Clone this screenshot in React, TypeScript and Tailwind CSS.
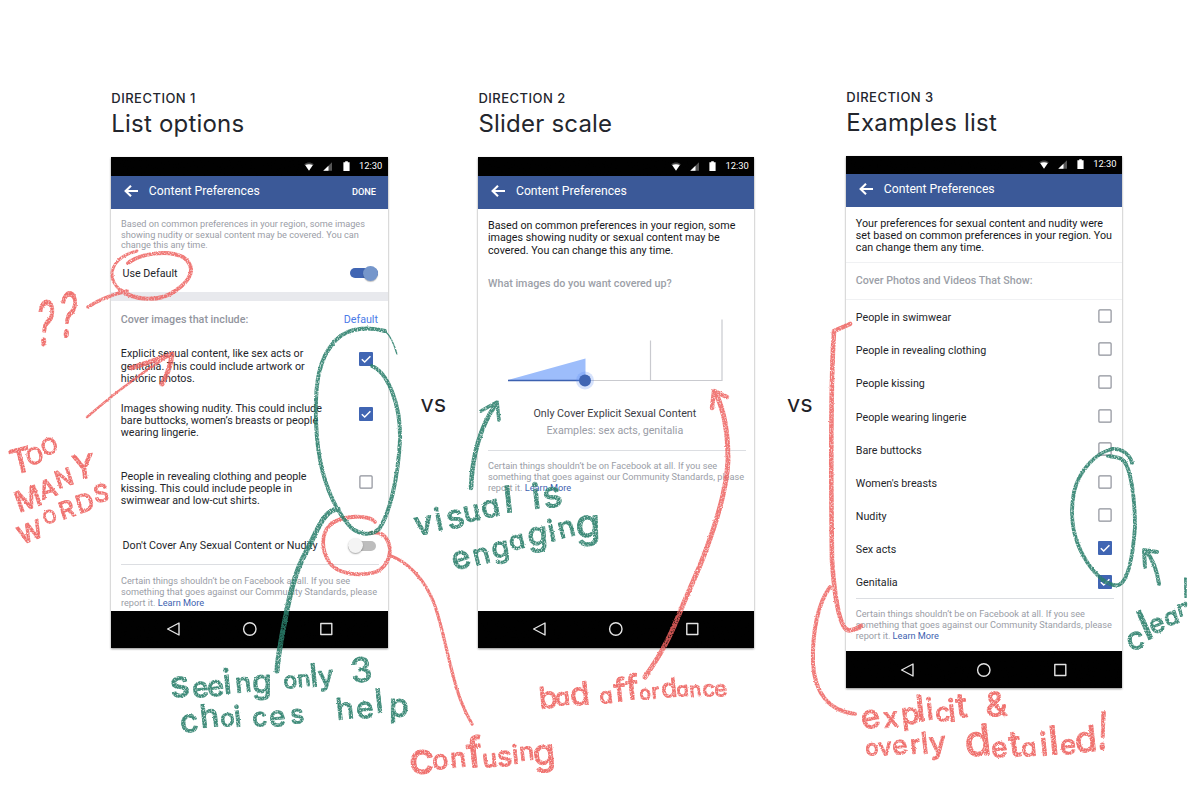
import React, { type ReactNode } from 'react';

const body = 'text-[10.72px] leading-[12.3px]';
const small = 'text-[9.19px] leading-[10.7px] text-[#9a9da6]';

function StatusBar({ compact }: { compact?: boolean }) {
  return (
    <div className={`flex shrink-0 items-center justify-end bg-black pr-[5.5px] text-white ${compact ? 'h-[18px] pb-px' : 'h-[18.5px]'}`}>
      <svg className="mr-[9px] h-[9px] w-[10px]" viewBox="0 0 10 9">
        <path d="M0.2 2.2C3 -0.2 7 -0.2 9.8 2.2L5 8.6Z" fill="#444" />
        <path d="M1.2 3.1C3.6 1.8 6.4 1.8 8.8 3.1L5 8.8Z" fill="#fff" />
      </svg>
      <svg className="mr-[10px] h-[9px] w-[9.5px]" viewBox="0 0 10 9">
        <path d="M0.3 9L9.5 0V9Z" fill="#555" />
        <path d="M0.3 9L5.8 3.6V9Z" fill="#fff" />
      </svg>
      <svg className="mr-[9px] h-[10px] w-[7px]" viewBox="0 0 7 10">
        <path d="M0.4 1.3H2.2V0.3H4.8V1.3H6.6V9.9H0.4Z" fill="#fff" />
      </svg>
      <span className="w-[23.5px] text-[9.4px] leading-[18px]">12:30</span>
    </div>
  );
}

function Header({ done, compact }: { done?: boolean; compact?: boolean }) {
  return (
    <div className={`flex shrink-0 items-center bg-[#3b5998] pb-[2px] pl-[12.5px] pr-[12px] text-white ${compact ? 'h-[33px]' : 'h-[33.5px]'}`}>
      <svg className="mr-[10.5px] h-[12px] w-[14.5px]" viewBox="0 0 14.5 12" fill="none" stroke="#fff" strokeWidth="2.1">
        <path d="M1.6 6H14M7 0.8L1.6 6L7 11.2" />
      </svg>
      <span className="grow text-[12.2px] leading-[16px]">Content Preferences</span>
      {done && <span className="pt-[2px] text-[9.2px] font-medium leading-[14px]">DONE</span>}
    </div>
  );
}

function NavBar() {
  return (
    <div className="flex h-[37px] shrink-0 items-center justify-center bg-black">
      <svg className="h-[16px] w-[170px]" viewBox="0 0 170 16" fill="none" stroke="#e4e4e4" strokeWidth="1.4" strokeLinejoin="round">
        <path d="M2.6 8L14 2V14Z" />
        <circle cx="84.8" cy="8" r="6.2" />
        <rect x="155.8" y="2.5" width="11" height="11" />
      </svg>
    </div>
  );
}

function Checkbox({ checked }: { checked?: boolean }) {
  return (
    <svg className="h-[14px] w-[14px] shrink-0" viewBox="0 0 14 14" fill="none">
      {checked ? (
        <>
          <rect width="14" height="14" rx="1" fill="#4065b3" />
          <path d="M2.8 7.2L5.7 10L11.4 4.3" stroke="#fff" strokeWidth="1.5" />
        </>
      ) : (
        <rect x="0.9" y="0.9" width="12.2" height="12.2" rx="0.9" stroke="#8f929b" strokeWidth="1.2" />
      )}
    </svg>
  );
}

function Phone({ done, compact, height, children }: { done?: boolean; compact?: boolean; height: string; children: ReactNode }) {
  return (
    <div className={`flex flex-col bg-white shadow-[0_1px_2px_rgba(0,0,0,0.45)] ${height}`}>
      <StatusBar compact={compact} />
      <Header done={done} compact={compact} />
      <div className="flex min-h-0 grow flex-col">{children}</div>
      <NavBar />
    </div>
  );
}

function Heading({ label, title }: { label: string; title: string }) {
  return (
    <div className="font-[Inter,sans-serif] text-[#23262d]">
      <div className="h-[21px] text-[13px] font-medium leading-[20px] tracking-[0.48px]">{label}</div>
      <div className="mb-[18px] h-[30px] text-[24px] leading-[30px] tracking-[0.2px]">{title}</div>
    </div>
  );
}

function Policy() {
  return (
    <p className={`whitespace-nowrap ${small}`}>
      Certain things shouldn’t be on Facebook at all. If you see
      <br />
      something that goes against our Community Standards, please
      <br />
      report it. <span className="text-[#3e62b0]">Learn More</span>
    </p>
  );
}

function Option({ lines, checked, className }: { lines: string[]; checked?: boolean; className: string }) {
  return (
    <div className={`flex items-start justify-between pl-[9.5px] pr-[15px] text-[#24262b] ${className}`}>
      <p className={`whitespace-nowrap ${body}`}>
        {lines.map((l) => (
          <span key={l} className="block">{l}</span>
        ))}
      </p>
      <div className="mt-[4px] flex">
        <Checkbox checked={checked} />
      </div>
    </div>
  );
}

function Versus() {
  return (
    <div className="flex w-[90.5px] shrink-0 justify-center pt-[391px] font-[Inter,sans-serif] text-[23.5px] leading-[26px] text-[#1f2228]">
      vs
    </div>
  );
}

const examples: [string, boolean][] = [
  ['People in swimwear', false],
  ['People in revealing clothing', false],
  ['People kissing', false],
  ['People wearing lingerie', false],
  ['Bare buttocks', false],
  ["Women's breasts", false],
  ['Nudity', false],
  ['Sex acts', true],
  ['Genitalia', true],
];

type Glyph = [string, number, number, number, number?];

function Hand({ glyphs, color, weight = 500 }: { glyphs: Glyph[]; color: string; weight?: number }) {
  return (
    <text fill={color} stroke={color} strokeWidth="0.8" fontWeight={weight} className="font-[Inter,sans-serif] [font-feature-settings:'cv11']">
      {glyphs.map(([c, x, y, size, rotate], i) => (
        <tspan key={i} x={x} y={y} fontSize={size} rotate={rotate ?? -6}>{c}</tspan>
      ))}
    </text>
  );
}

const RED = '#ee625f';
const GREEN = '#2b7f6b';

const redNotes: Glyph[][] = [
  [['T', 13, 475, 34, -14], ['O', 28, 466, 23, -14], ['O', 43, 456, 22, -14]],
  [['M', 19, 513, 29, -20], ['A', 42, 500, 25, -18], ['N', 58, 489, 24, -18], ['Y', 74, 480, 33, -8]],
  [['W', 22, 545, 25, -22], ['O', 45, 525, 18, -18], ['R', 62, 520, 24, -18], ['D', 79, 514, 25, -18], ['S', 95, 503, 24, -10]],
  [['c', 409, 774, 44, 0], ['o', 433, 770, 27], ['n', 451, 768, 27], ['f', 468, 768, 42], ['u', 483, 768, 25], ['s', 498, 767, 28], ['i', 513, 764, 26], ['n', 520, 761, 25], ['g', 534, 766, 36]],
  [['b', 540, 709, 30], ['a', 556, 706, 24], ['d', 571, 706, 32], [' ', 587, 705, 20], ['a', 600, 704, 22], ['f', 615, 702, 32], ['f', 627, 700, 34], ['o', 640, 700, 19], ['r', 652, 699, 21], ['d', 662, 698, 26], ['a', 677, 697, 20], ['n', 690, 697, 20], ['c', 703, 697, 22], ['e', 715, 697, 22]],
  [['e', 863, 730, 33, -12], ['x', 884, 728, 28], ['p', 902, 725, 30], ['l', 917, 722, 37], ['i', 927, 720, 30], ['c', 936, 722, 26], ['i', 949, 722, 31], ['t', 957, 718, 34], [' ', 975, 718, 20], ['&', 986, 717, 34, -4]],
  [['o', 866, 756, 22], ['v', 879, 756, 24], ['e', 893, 755, 26], ['r', 911, 754, 26], ['l', 922, 754, 30], ['y', 930, 754, 30], [' ', 948, 754, 20], ['d', 966, 757, 43], ['e', 992, 758, 28], ['t', 1010, 757, 36], ['a', 1022, 757, 25], ['i', 1041, 756, 32], ['l', 1050, 755, 40], ['e', 1061, 755, 27], ['d', 1076, 753, 36]],
];

const greenNotes: Glyph[][] = [
  [['s', 171, 698, 37], ['e', 193, 698, 28], ['e', 208, 697, 29], ['i', 224, 694, 34], ['n', 236, 693, 27], ['g', 252, 693, 32, 0], [' ', 270, 690, 20], ['o', 284, 689, 23], ['n', 298, 687, 22], ['l', 311, 687, 32], ['y', 319, 686, 27], [' ', 335, 686, 20], ['3', 352, 683, 34]],
  [['c', 181, 733, 32], ['h', 201, 728, 32], ['o', 221, 727, 24], ['i', 235, 727, 29], ['c', 253, 727, 26], ['e', 270, 727, 28], ['s', 291, 724, 26], [' ', 310, 722, 20], ['h', 337, 720, 30], ['e', 357, 719, 30], ['l', 376, 713, 33], ['p', 389, 717, 32, 0]],
  [['v', 416, 536, 33, -10], ['i', 437, 531, 31, -12], ['s', 449, 530, 33, -14], ['u', 465, 523, 29, -12], ['a', 483, 519, 31, -12], ['l', 505, 513, 37, -6], [' ', 520, 510, 20], ['i', 533, 509, 35, -6], ['s', 545, 509, 36, -12]],
  [['e', 455, 571, 32, -18], ['n', 475, 566, 29, -14], ['g', 493, 559, 29, -10], ['a', 511, 551, 26, -14], ['g', 528, 546, 33, -4], ['i', 550, 542, 30, -12], ['n', 560, 539, 29, -14], ['g', 576, 538, 40, -2]],
  [['c', 1129, 651, 31, -14], ['l', 1146, 641, 42, -24], ['e', 1153, 635, 26, -24], ['a', 1167, 627, 24, -20], ['r', 1179, 617, 22, -16]],
];

function Annotations() {
  return (
    <svg className="pointer-events-none absolute inset-0 h-[800px] w-[1200px]" viewBox="0 0 1200 800" fill="none">
      <defs>
        <filter id="crayon" filterUnits="userSpaceOnUse" x="0" y="0" width="1200" height="800" colorInterpolationFilters="sRGB">
          <feTurbulence type="fractalNoise" baseFrequency="0.7" numOctaves="2" seed="4" result="noise" />
          <feColorMatrix in="noise" type="matrix" values="0 0 0 0 0  0 0 0 0 0  0 0 0 0 0  0 0 0 -2.4 2.15" result="grain" />
          <feDisplacementMap in="SourceGraphic" in2="noise" scale="2" xChannelSelector="R" yChannelSelector="G" result="rough" />
          <feComposite in="rough" in2="grain" operator="in" />
        </filter>
      </defs>
      <g filter="url(#crayon)" strokeLinecap="round" strokeLinejoin="round">
        <rect width="1200" height="800" fill="#fff" fillOpacity="0.002" />
        <g stroke={RED} opacity="0.85">
          <path d="M137 251C110 258 106 277 120 290" strokeWidth="3" />
          <path d="M128 263C140 254 167 249 183 257C198 268 190 281 175 291C158 303 134 300 120 290" strokeWidth="4" />
          <path d="M88 307C100 299 114 294 127 291" strokeWidth="3.6" />
          <path d="M87 417C100 406 114 394 128 384C142 373 156 364 168 356" strokeWidth="2.6" />
          <path d="M131 368C146 363 160 359 172 354C171 365 167 375 162 384" strokeWidth="5" />
          <path d="M375 522C370 515 342 514 330 525C321 534 321 549 329 562C337 574 358 577 376 572C389 566 394 550 386 538C382 532 376 532 370 533" strokeWidth="3.8" />
          <path d="M391 556C408 562 425 580 434 603C442 625 446 650 453 675C458 697 465 712 472 724" strokeWidth="3.2" />
          <path d="M645 677C656 661 667 645 680 612C688 592 694 580 701 563C716 525 727 490 728 460C728 432 723 407 715 392" strokeWidth="5" />
          <path d="M727 397L714 391L712 408" strokeWidth="4.4" />
          <path d="M850 324L834 331C830 390 831 480 832 560C834 590 839 635 851 630C855 630 858 628 861 626" strokeWidth="4.6" />
          <path d="M830 587C818 603 812 632 813 664C815 692 828 711 855 714" strokeWidth="4" />
        </g>
        <g stroke={GREEN} opacity="0.88">
          <path d="M397 354C394 344 390 335 385 331" strokeWidth="1.4" />
          <path d="M385 331C374 328 350 325 336 340C318 358 315 385 316 420C317 460 325 495 347 523C357 536 371 536 379 529C389 515 398 480 400 440C401 405 388 373 372 366" strokeWidth="4" />
          <path d="M338 509C323 510 317 532 306 552C292 577 287 610 283 630C280 648 278 655 277 671" strokeWidth="5.2" />
          <path d="M471 488C472 460 478 430 496 404" strokeWidth="4.6" />
          <path d="M481 411L497 402L499 420" strokeWidth="3.6" />
          <path d="M1132 463C1130 454 1121 448 1112 449C1096 453 1079 470 1074 492C1069 518 1074 542 1087 562C1097 577 1109 587 1119 585C1129 580 1133 555 1135 527C1135 498 1131 470 1124 461C1119 456 1113 457 1108 456" strokeWidth="3.8" />
          <path d="M1159 584C1157 571 1153 560 1147 552M1157 552L1144 550L1145 567" strokeWidth="4" />
        </g>
        <g opacity="0.9">
          <rect width="1200" height="800" fill="#fff" fillOpacity="0.002" />
          <g transform="translate(35 345) rotate(4) scale(0.58 1)">
            <Hand color={RED} weight={400} glyphs={[['?', 0, 0, 62, 0], ['?', 38, -10, 62, 0]]} />
          </g>
          {redNotes.map((g, i) => (
            <Hand key={i} color={RED} glyphs={g} />
          ))}
          {greenNotes.map((g, i) => (
            <Hand key={i} color={GREEN} glyphs={g} />
          ))}
          <g transform="translate(1097 749) scale(0.7 1)">
            <Hand color={RED} weight={400} glyphs={[['!', 0, 0, 52, 3]]} />
          </g>
          <g transform="translate(1182 607) scale(0.6 1)">
            <Hand color={GREEN} weight={400} glyphs={[['!', 0, 0, 40, 0]]} />
          </g>
        </g>
      </g>
    </svg>
  );
}

export default function App() {
  return (
    <div className="relative h-[800px] w-[1200px] overflow-hidden bg-white font-[Roboto,sans-serif]">
      <div className="flex items-start pl-[111.3px]">
        <section className="w-[276.7px] shrink-0 pt-[88px]">
          <Heading label="DIRECTION 1" title="List options" />
          <Phone done height="h-[490.5px]">
            <p className={`whitespace-nowrap pl-[9.7px] pt-[10px] ${small}`}>
              Based on common preferences in your region, some images
              <br />
              showing nudity or sexual content may be covered. You can
              <br />
              change this any time.
            </p>
            <div className="flex h-[41px] items-center justify-between pl-[11.2px] pr-[10px] pt-[3px] text-[#24262b]">
              <span className={`pt-[2px] ${body}`}>Use Default</span>
              <div className="flex h-[10px] w-[28px] items-center justify-end rounded-full bg-[#4065b3]">
                <div className="h-[15px] w-[15px] shrink-0 rounded-full bg-[#7596cb] shadow-[0_1px_1px_rgba(0,0,0,0.25)]" />
              </div>
            </div>
            <div className="h-[9px] shrink-0 bg-[#e8e9ed]" />
            <div className={`flex h-[36px] items-center justify-between pl-[9.5px] pr-[10px] pt-[2px] ${body}`}>
              <span className="font-medium text-[#92959e]">Cover images that include:</span>
              <span className="text-[#4b7be8]">Default</span>
            </div>
            <Option
              className="mt-[11.3px]"
              checked
              lines={['Explicit sexual content, like sex acts or', 'genitalia. This could include artwork or', 'historic photos.']}
            />
            <Option
              className="mt-[17.3px]"
              checked
              lines={['Images showing nudity. This could include', 'bare buttocks, women’s breasts or people', 'wearing lingerie.']}
            />
            <Option
              className="mt-[31.3px]"
              lines={['People in revealing clothing and people', 'kissing. This could include people in', 'swimwear and low-cut shirts.']}
            />
            <div className="ml-[9.7px] mr-[9px] mt-[18.2px] flex h-[39.5px] shrink-0 items-center justify-between border-b border-[#dcdee2] pl-[1.5px] pr-[2.5px] pt-px text-[#24262b]">
              <span className={`pt-[2px] ${body}`}>Don't Cover Any Sexual Content or Nudity</span>
              <div className="flex h-[10px] w-[28px] items-center rounded-full bg-[#bdbdbd]">
                <div className="h-[15px] w-[15px] shrink-0 rounded-full bg-[#f4f4f4] shadow-[0_1px_1.5px_rgba(0,0,0,0.35)]" />
              </div>
            </div>
            <div className="pl-[9.7px] pt-[10.8px]">
              <Policy />
            </div>
          </Phone>
        </section>

        <Versus />

        <section className="w-[276px] shrink-0 pt-[88px]">
          <Heading label="DIRECTION 2" title="Slider scale" />
          <Phone height="h-[490.5px]">
            <p className={`whitespace-nowrap pl-[9.5px] pt-[11px] text-[#17181b] ${body}`}>
              Based on common preferences in your region, some
              <br />
              images showing nudity or sexual content may be
              <br />
              covered. You can change this any time.
            </p>
            <p className={`pl-[9.5px] pt-[21px] font-medium text-[#9c9fa8] ${body}`}>What images do you want covered up?</p>
            <svg className="ml-[28px] mt-[27px] h-[74px] w-[220px] shrink-0" viewBox="0 0 220 74" fill="none">
              <path d="M144.5 23.5V63.5M79 63.5H216V2.5" stroke="#c9cacf" strokeWidth="1.2" />
              <path d="M2 63L79.5 41.5V63Z" fill="#9dbdfb" />
              <path d="M2 63.5H79" stroke="#3c61b0" strokeWidth="1.6" />
              <circle cx="79" cy="63.5" r="9" fill="#5b8df5" fillOpacity="0.25" />
              <circle cx="79" cy="63.5" r="6" fill="#4065b3" />
            </svg>
            <p className={`pl-[55px] pt-[17.2px] text-[#3d4046] ${body}`}>Only Cover Explicit Sexual Content</p>
            <p className={`pl-[68px] pt-[4.4px] text-[#9a9da6] ${body}`}>Examples: sex acts, genitalia</p>
            <div className="ml-[9.5px] mr-[8px] mt-[12.4px] border-t border-[#dcdee2] pt-[10.5px]">
              <Policy />
            </div>
          </Phone>
        </section>

        <Versus />

        <section className="ml-[1.3px] w-[276px] shrink-0 pt-[86.5px]">
          <Heading label="DIRECTION 3" title="Examples list" />
          <Phone compact height="h-[532.5px]">
            <p className={`h-[56px] shrink-0 whitespace-nowrap border-b border-[#f0f1f3] pl-[9.5px] pt-[11px] text-[#17181b] ${body}`}>
              Your preferences for sexual content and nudity were
              <br />
              set based on common preferences in your region. You
              <br />
              can change them any time.
            </p>
            <p className="flex h-[37px] shrink-0 items-center border-b border-[#f0f1f3] pl-[9.5px] pt-px text-[10.72px] font-medium text-[#9c9fa8]">
              Cover Photos and Videos That Show:
            </p>
            <div className="shrink-0 text-[#24262b]">
              {examples.map(([name, checked]) => (
                <div key={name} className="flex h-[33.2px] items-center justify-between pl-[9.5px] pr-[10px]">
                  <span className={`pt-[4px] ${body}`}>{name}</span>
                  <Checkbox checked={checked} />
                </div>
              ))}
            </div>
            <div className="ml-[9.5px] mr-[8px] border-t border-[#dcdee2] pt-[10.2px]">
              <Policy />
            </div>
          </Phone>
        </section>
      </div>
      <Annotations />
    </div>
  );
}
